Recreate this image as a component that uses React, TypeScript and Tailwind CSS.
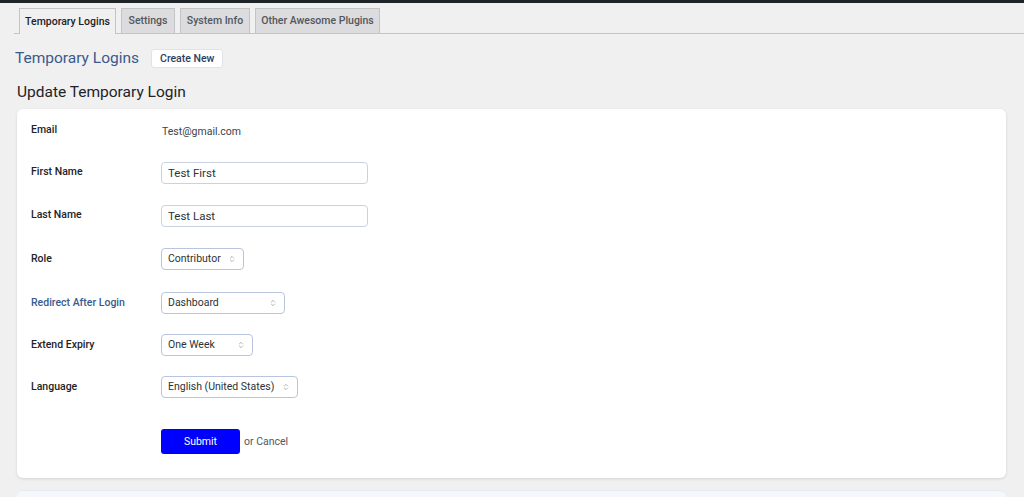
import { LuChevronsUpDown } from "react-icons/lu";

const tabs = [
  { label: "Temporary Logins", w: "w-[97px]", active: true },
  { label: "Settings", w: "w-[54px]", active: false },
  { label: "System Info", w: "w-[70px]", active: false },
  { label: "Other Awesome Plugins", w: "w-[125px]", active: false },
];

const Select = ({ value, w }: { value: string; w: string }) => (
  <div
    className={`${w} h-[22px] flex items-center justify-between pl-[6px] pr-[7px] border border-[#b9c5de] rounded-[4px] bg-white text-[10.5px] text-[#2c3338] whitespace-nowrap`}
  >
    <span>{value}</span>
    <LuChevronsUpDown className="text-[#8c8f94] text-[8px]" />
  </div>
);

const Row = ({ label, h, blue, children }: { label: string; h: string; blue?: boolean; children: React.ReactNode }) => (
  <div className={`flex items-center ${h}`}>
    <div className={`w-[130px] text-[10.5px] font-medium ${blue ? "text-[#3a5a8c]" : "text-[#1d2327]"}`}>{label}</div>
    <div>{children}</div>
  </div>
);

const App: React.FC = () => {
  return (
    <div className="h-[497px] overflow-hidden bg-[#f0f0f1] font-['Roboto',sans-serif] text-[#1d2327]">
      <div className="h-[3px] bg-[#1d2327]" />

      {/* tabs */}
      <div className="ml-[14px] pt-[5px] pl-[5px] flex items-end gap-[5px] border-b border-[#c3c4c7]">
        {tabs.map((t) => (
          <div
            key={t.label}
            className={`${t.w} flex items-center justify-center border border-b-0 border-[#c3c4c7] text-[10.5px] font-medium whitespace-nowrap ${
              t.active ? "bg-[#f0f0f1] text-[#1d2327] -mb-px h-[26px]" : "h-[25px] bg-[#dcdcde] text-[#50575e]"
            }`}
          >
            {t.label}
          </div>
        ))}
      </div>

      {/* heading */}
      <div className="flex items-center gap-[12px] pl-[15px] mt-[15px] h-[19px]">
        <h1 className="text-[15.5px] leading-[19px] text-[#3a5a8c]">Temporary Logins</h1>
        <button className="h-[19px] px-[8px] bg-white border border-[#dfe3ea] rounded-[3px] text-[10.5px] font-medium text-[#2c3e5e]">
          Create New
        </button>
      </div>

      <h2 className="pl-[17px] mt-[14px] text-[15.5px] leading-[20px] text-[#1d2327]">Update Temporary Login</h2>

      {/* form card */}
      <div className="mt-[7px] ml-[17px] mr-[18px] bg-white rounded-[6px] shadow-[0_1px_3px_rgba(0,0,0,0.12)] pl-[14px] pb-[24px]">
        <Row label="Email" h="h-[42px]">
          <span className="text-[10.5px] text-[#3c434a] pl-[1px]">Test@gmail.com</span>
        </Row>
        <Row label="First Name" h="h-[42px]">
          <input
            readOnly
            value="Test First"
            className="w-[207px] h-[22px] px-[6px] border border-[#c9d2e4] rounded-[4px] text-[11.5px] text-[#2c3338] outline-none"
          />
        </Row>
        <Row label="Last Name" h="h-[44px]">
          <input
            readOnly
            value="Test Last"
            className="w-[207px] h-[22px] px-[6px] border border-[#c9d2e4] rounded-[4px] text-[11.5px] text-[#2c3338] outline-none"
          />
        </Row>
        <Row label="Role" h="h-[44px]">
          <Select value="Contributor" w="w-[83px]" />
        </Row>
        <Row label="Redirect After Login" h="h-[43px]" blue>
          <Select value="Dashboard" w="w-[124px]" />
        </Row>
        <Row label="Extend Expiry" h="h-[42px]">
          <Select value="One Week" w="w-[92px]" />
        </Row>
        <Row label="Language" h="h-[42px]">
          <Select value="English (United States)" w="w-[137px]" />
        </Row>

        <div className="flex items-center pl-[130px] mt-[21px]">
          <button className="w-[79px] h-[25px] bg-[#0000ff] rounded-[3px] text-white text-[10.5px]">Submit</button>
          <span className="ml-[4px] text-[10.5px] text-[#50575e]">or Cancel</span>
        </div>
      </div>

      <div className="mt-[12px] ml-[17px] mr-[18px] h-[20px] bg-[#f5f7fc] rounded-t-[6px] border-t border-[#e6e9f0]" />
    </div>
  );
};

export default App;
